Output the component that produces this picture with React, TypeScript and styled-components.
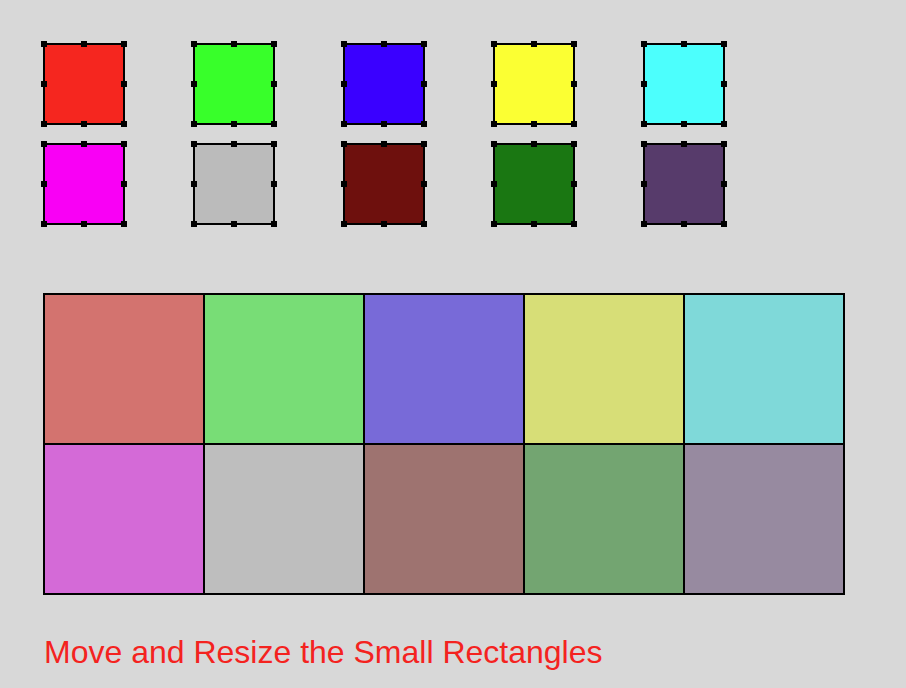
import React from "react";
import styled, { createGlobalStyle } from "styled-components";

const GlobalStyle = createGlobalStyle`
  html, body {
    margin: 0;
    padding: 0;
    background: #d8d8d8;
  }
  body {
    font-family: "Liberation Sans", Arial, sans-serif;
  }
`;

const Page = styled.div`
  width: 906px;
  height: 688px;
  box-sizing: border-box;
  padding: 43px 0 0 43px;
  background: #d8d8d8;
  display: flex;
  flex-direction: column;
  align-items: flex-start;
`;

const SmallGrid = styled.div`
  display: grid;
  grid-template-columns: repeat(5, 82px);
  grid-auto-rows: 82px;
  column-gap: 68px;
  row-gap: 18px;
`;

const SmallRect = styled.div<{ $color: string }>`
  position: relative;
  box-sizing: border-box;
  width: 82px;
  height: 82px;
  border: 2px solid #000;
  background: ${(p) => p.$color};
`;

const Handle = styled.span<{ $x: number; $y: number }>`
  position: absolute;
  left: ${(p) => p.$x}px;
  top: ${(p) => p.$y}px;
  width: 6px;
  height: 6px;
  background: #000;
`;

const BigGrid = styled.div`
  margin-top: 68px;
  display: grid;
  grid-template-columns: repeat(5, 158px);
  grid-auto-rows: 148px;
  gap: 2px;
  padding: 2px;
  background: #000;
`;

const Cell = styled.div<{ $color: string }>`
  background: ${(p) => p.$color};
`;

const Caption = styled.div`
  margin-top: 39px;
  margin-left: 1px;
  font-family: "Liberation Sans", Arial, sans-serif;
  font-size: 32px;
  line-height: 37px;
  color: #f4231f;
  white-space: nowrap;
`;

const smallColors = [
  "#f5261f",
  "#38ff2a",
  "#3a00ff",
  "#fbff33",
  "#4cfffd",
  "#f900f5",
  "#bbbbbb",
  "#6e100d",
  "#1a7712",
  "#573b6b",
];

const bigColors = [
  "#d3736f",
  "#78dd76",
  "#786ad8",
  "#d7de77",
  "#7fd9d9",
  "#d46ad7",
  "#bebebe",
  "#9e7370",
  "#73a571",
  "#978aa0",
];

const handlePos = [-4, 36, 76];
const handles: Array<[number, number]> = [];
handlePos.forEach((y, yi) =>
  handlePos.forEach((x, xi) => {
    if (!(xi === 1 && yi === 1)) handles.push([x, y]);
  })
);

export default function App() {
  return (
    <>
      <GlobalStyle />
      <Page>
        <SmallGrid>
          {smallColors.map((c, i) => (
            <SmallRect key={i} $color={c}>
              {handles.map(([x, y], j) => (
                <Handle key={j} $x={x} $y={y} />
              ))}
            </SmallRect>
          ))}
        </SmallGrid>
        <BigGrid>
          {bigColors.map((c, i) => (
            <Cell key={i} $color={c} />
          ))}
        </BigGrid>
        <Caption>Move and Resize the Small Rectangles</Caption>
      </Page>
    </>
  );
}
